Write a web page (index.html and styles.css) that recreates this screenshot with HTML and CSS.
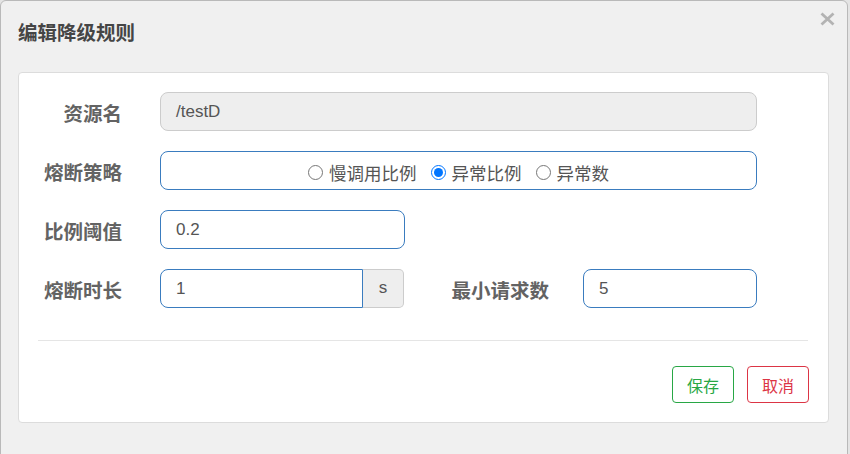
FILE: index.html
```html
<!DOCTYPE html>
<html lang="zh">
<head>
<meta charset="utf-8">
<title>编辑降级规则</title>
<link rel="stylesheet" href="styles.css">
</head>
<body>
<div class="modal">
  <div class="modal-header">
    <h4 class="modal-title">编辑降级规则</h4>
    <button class="close" type="button" aria-label="关闭">
      <svg width="15" height="14" viewBox="0 0 15 14"><path d="M1.5 1.5 L13.5 12.5 M13.5 1.5 L1.5 12.5" stroke="#b3b3b3" stroke-width="2.8" stroke-linecap="butt" fill="none"/></svg>
    </button>
  </div>
  <div class="panel">
    <div class="row">
      <label class="label">资源名</label>
      <div class="control control-wide disabled">/testD</div>
    </div>
    <div class="row">
      <label class="label">熔断策略</label>
      <div class="control control-wide radios">
        <label class="radio"><input type="radio" name="grade"><span>慢调用比例</span></label>
        <label class="radio"><input type="radio" name="grade" checked><span>异常比例</span></label>
        <label class="radio"><input type="radio" name="grade"><span>异常数</span></label>
      </div>
    </div>
    <div class="row">
      <label class="label">比例阈值</label>
      <div class="control control-mid">0.2</div>
    </div>
    <div class="row">
      <label class="label">熔断时长</label>
      <div class="input-group">
        <div class="control control-group">1</div>
        <span class="addon">s</span>
      </div>
      <label class="label label-second">最小请求数</label>
      <div class="control control-small">5</div>
    </div>
    <hr class="divider">
    <div class="actions">
      <button class="btn btn-save" type="button">保存</button>
      <button class="btn btn-cancel" type="button">取消</button>
    </div>
  </div>
</div>
</body>
</html>
```

FILE: styles.css
```css
* { box-sizing: border-box; }

html, body {
  margin: 0;
  padding: 0;
}

body {
  background: #e4e4e4;
  font-family: "Liberation Sans", "Noto Sans CJK SC", sans-serif;
  color: #555;
  width: 850px;
  height: 454px;
  overflow: hidden;
}

.modal {
  width: 848px;
  height: 470px;
  background: #f0f0f0;
  border: 1px solid #b9b9b9;
  border-radius: 6px;
  padding: 0 17px;
}

.modal-header {
  display: flex;
  justify-content: space-between;
  align-items: flex-start;
  height: 64px;
  margin-bottom: 7px;
}

.modal-title {
  margin: 0;
  line-height: 64px;
  font-size: 19.5px;
  font-weight: bold;
  color: #454545;
}

.close {
  margin: 11px -5px 0 0;
  padding: 0;
  border: 0;
  background: none;
  width: 15px;
  height: 14px;
  display: flex;
}

.panel {
  width: 811px;
  background: #fff;
  border: 1px solid #dcdcdc;
  border-radius: 4px;
  padding: 19px 0 19px 0;
}

.row {
  display: flex;
  align-items: center;
  margin-bottom: 20px;
}

.row:last-of-type { margin-bottom: 0; }

.label {
  width: 103px;
  text-align: right;
  font-size: 19.5px;
  font-weight: bold;
  color: #636363;
  margin-right: 38px;
  white-space: nowrap;
  padding-top: 2px;
}

.label-second {
  width: 145px;
  margin-right: 34px;
}

.control {
  height: 39px;
  border: 1px solid #3a7cbf;
  border-radius: 8px;
  padding: 0 15px;
  display: flex;
  align-items: center;
  font-size: 17px;
  color: #555;
  background: #fff;
}

.control-wide { width: 597px; }
.control-mid { width: 245px; }
.control-small { width: 174px; }

.disabled {
  background: #eee;
  border-color: #ccc;
}

.radios {
  justify-content: center;
  padding-top: 4px;
}

.radio {
  display: flex;
  align-items: center;
  font-size: 17.5px;
  color: #555;
  margin: 0 7px;
}

.radio input {
  width: 15px;
  height: 15px;
  margin: 0 6px 0 0;
}

.input-group {
  display: flex;
  width: 244px;
}

.control-group {
  width: 203px;
  border-radius: 8px 0 0 8px;
  padding-left: 15px;
}

.addon {
  width: 41px;
  height: 39px;
  border: 1px solid #ccc;
  border-left: 0;
  border-radius: 0 5px 5px 0;
  background: #eee;
  display: flex;
  align-items: center;
  justify-content: center;
  font-size: 17px;
  color: #555;
  padding-bottom: 2px;
}

.divider {
  border: 0;
  border-top: 1px solid #e5e5e5;
  margin: 32px 20px 25px 19px;
  height: 0;
}

.actions {
  display: flex;
  justify-content: flex-end;
  gap: 13px;
  padding-right: 19px;
}

.btn {
  width: 62px;
  height: 37px;
  background: #fff;
  border: 1px solid;
  border-radius: 4px;
  font-family: "Liberation Sans", "Noto Sans CJK SC", sans-serif;
  font-size: 16px;
  padding: 0;
}

.btn-save { color: #28a745; border-color: #28a745; }
.btn-cancel { color: #dc3545; border-color: #dc3545; }
```
